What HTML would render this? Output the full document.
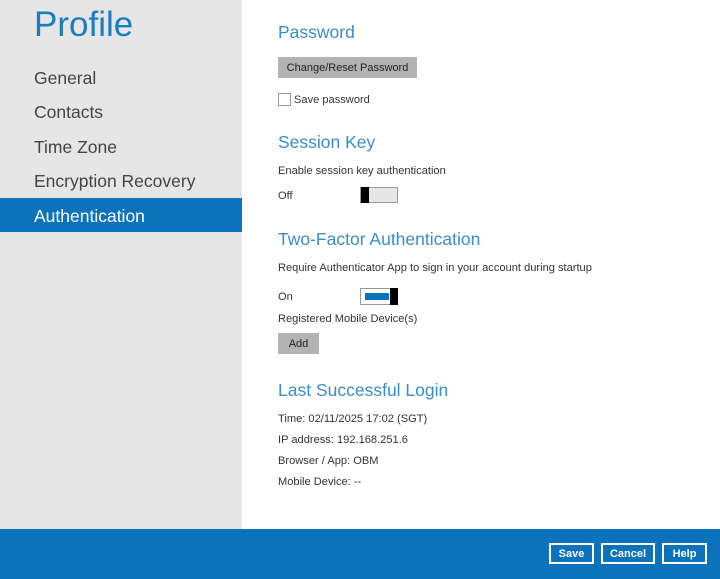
<!DOCTYPE html>
<html><head><style>
body{margin:0;width:720px;height:579px;position:relative;overflow:hidden;font-family:"Liberation Sans",sans-serif;background:#fff}
.side{position:absolute;left:0;top:0;width:242px;height:529px;background:#e6e6e6}
.t{position:absolute;white-space:nowrap}
.h1{font-size:35px;color:#1a7cc1;left:34px;top:5px}
.nav{font-size:17.5px;color:#444;left:34px}
.sel{position:absolute;left:0;top:198px;width:242px;height:34px;background:#0b72bb}
.h2{font-size:17.5px;color:#3a8dc8;left:278px}
.p{font-size:11.1px;color:#333;left:278px}
.btn{position:absolute;background:#b3b3b3;font-size:11px;color:#222;text-align:center}
.foot{position:absolute;left:0;top:529px;width:720px;height:50px;background:#0b72bb}
.fb{position:absolute;top:543px;height:21px;border:2px solid #fff;box-sizing:border-box;color:#fff;font-size:11px;font-weight:bold;text-align:center;line-height:19px}
</style></head><body>
<div class="side"></div>
<div class="sel"></div>
<div class="t h1">Profile</div>
<div class="t nav" style="top:68px">General</div>
<div class="t nav" style="top:102px">Contacts</div>
<div class="t nav" style="top:137px">Time Zone</div>
<div class="t nav" style="top:171px">Encryption Recovery</div>
<div class="t nav" style="top:206px;color:#fff">Authentication</div>

<div class="t h2" style="top:22px">Password</div>
<div class="btn" style="left:278px;top:57px;width:139px;height:21px;line-height:23px">Change/Reset Password</div>
<div style="position:absolute;left:278px;top:93px;width:11px;height:11px;border:1px solid #999;background:#fff"></div>
<div class="t p" style="left:294px;top:94px">Save password</div>

<div class="t h2" style="top:132px">Session Key</div>
<div class="t p" style="top:165px">Enable session key authentication</div>
<div class="t p" style="top:190px">Off</div>
<div style="position:absolute;left:360px;top:187px;width:38px;height:16px;border:1px solid #999;background:#e6e6e6;box-sizing:border-box"><div style="position:absolute;left:0;top:-1px;width:8px;height:16px;background:#000"></div></div>

<div class="t h2" style="top:229px">Two-Factor Authentication</div>
<div class="t p" style="top:262px">Require Authenticator App to sign in your account during startup</div>
<div class="t p" style="top:291px">On</div>
<div style="position:absolute;left:360px;top:288px;width:38px;height:17px;border:1px solid #999;background:#fff;box-sizing:border-box"><div style="position:absolute;left:4px;top:4px;width:24px;height:7px;background:#0b72bb"></div><div style="position:absolute;right:-1px;top:-1px;width:8px;height:17px;background:#000"></div></div>
<div class="t p" style="top:313px">Registered Mobile Device(s)</div>
<div class="btn" style="left:278px;top:333px;width:41px;height:21px;line-height:23px">Add</div>

<div class="t h2" style="top:380px">Last Successful Login</div>
<div class="t p" style="top:413px">Time: 02/11/2025 17:02 (SGT)</div>
<div class="t p" style="top:434px">IP address: 192.168.251.6</div>
<div class="t p" style="top:455px">Browser / App: OBM</div>
<div class="t p" style="top:476px">Mobile Device: --</div>

<div class="foot"></div>
<div class="fb" style="left:549px;width:45px">Save</div>
<div class="fb" style="left:601px;width:54px">Cancel</div>
<div class="fb" style="left:662px;width:45px">Help</div>
</body></html>
